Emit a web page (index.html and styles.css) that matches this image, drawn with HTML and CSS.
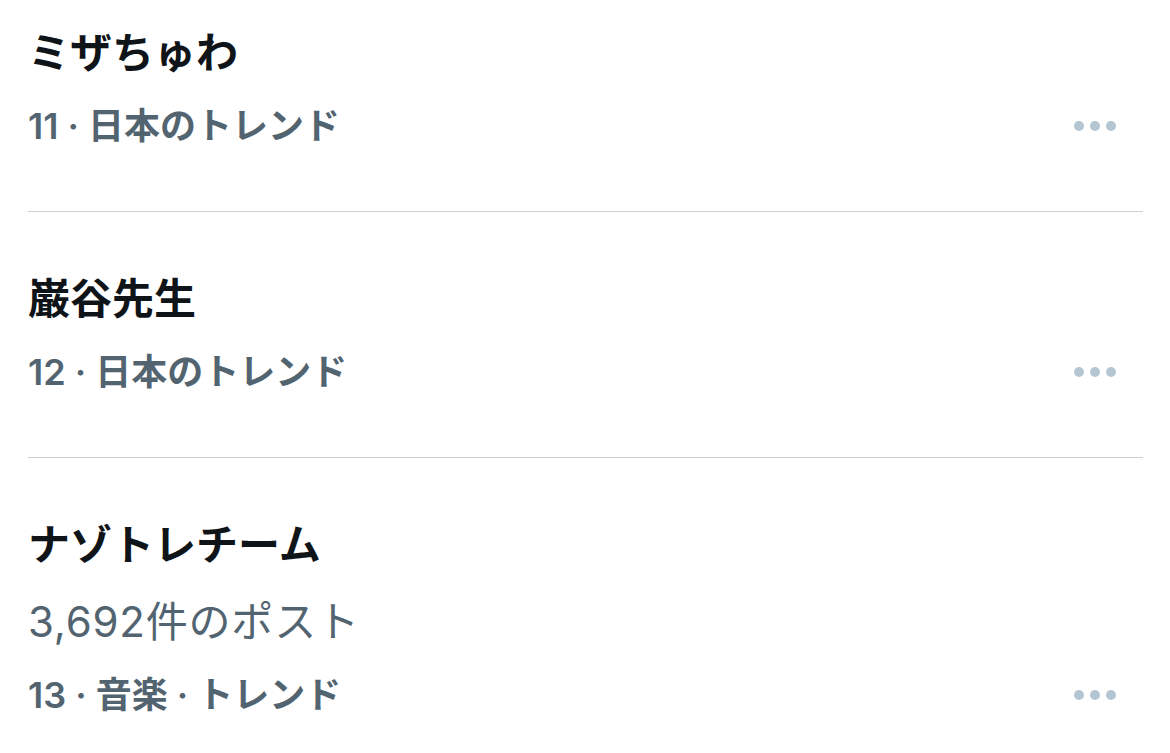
FILE: index.html
```html
<!DOCTYPE html>
<html lang="ja">
  <head>
    <meta charset="UTF-8" />
    <meta name="viewport" content="width=device-width, initial-scale=1.0" />
    <title>trends</title>
    <link rel="stylesheet" href="styles.css">
  </head>
  <body>
    <div class="trends">
      <!-- 11 -->
      <div class="trend">
        <div class="trend-title">ミザちゅわ</div>
        <div class="trend-meta">
          <span>11 · 日本のトレンド</span>
          <span class="more"><i></i><i></i><i></i></span>
        </div>
      </div>

      <!-- 12 -->
      <div class="trend">
        <div class="trend-title">巌谷先生</div>
        <div class="trend-meta">
          <span>12 · 日本のトレンド</span>
          <span class="more"><i></i><i></i><i></i></span>
        </div>
      </div>

      <!-- 13 -->
      <div class="trend">
        <div class="trend-title">ナゾトレチーム</div>
        <div class="trend-count">3,692件のポスト</div>
        <div class="trend-meta">
          <span>13 · 音楽 · トレンド</span>
          <span class="more"><i></i><i></i><i></i></span>
        </div>
      </div>
    </div>
  </body>
</html>
```

FILE: styles.css
```css
body {
  margin: 0;
  background: #ffffff;
  font-family: "Inter", "Noto Sans CJK JP", sans-serif;
  color: #0f1419;
}

.trends {
  padding: 0 27px 0 28px;
}

.trend {
  padding: 59px 0 60px;
  border-bottom: 1px solid #cfcfcf;
}

.trend:first-child {
  padding-top: 25px;
}

.trend:last-child {
  border-bottom: none;
}

.trend-title {
  font-size: 42px;
  font-weight: 700;
  line-height: 56px;
}

.trend-count {
  margin-top: 21px;
  font-size: 42px;
  line-height: 56px;
  letter-spacing: 0.8px;
  color: #536471;
}

.trend-meta {
  display: flex;
  justify-content: space-between;
  align-items: center;
  margin-top: 20px;
  font-size: 36px;
  font-weight: 600;
  line-height: 50px;
  color: #536471;
}

.more {
  display: flex;
  gap: 6px;
  margin-right: 27px;
}

.more i {
  width: 10px;
  height: 10px;
  border-radius: 50%;
  background: #b4c6d2;
}
```
